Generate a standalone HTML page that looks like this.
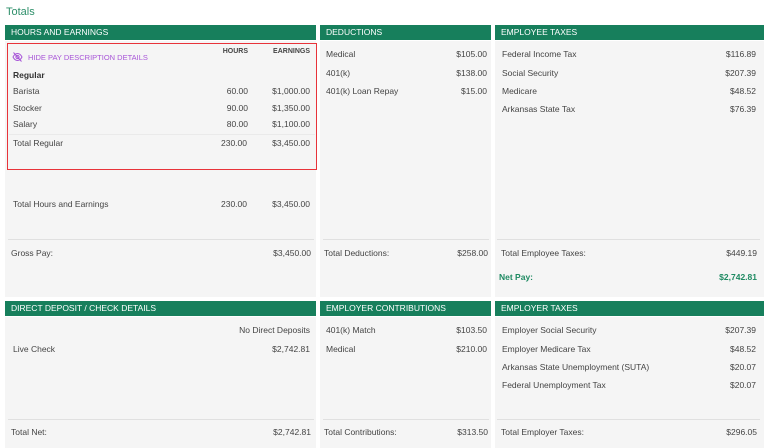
<!DOCTYPE html><html><head><style>
*{margin:0;padding:0;box-sizing:border-box}
body{width:768px;height:448px;background:#fff;font-family:"Liberation Sans",sans-serif;font-size:8.5px;color:#444;position:relative;overflow:hidden}
.a{position:absolute;white-space:nowrap;line-height:12px;height:12px}
.p{position:absolute;background:#f5f5f5}
.h{position:absolute;background:#177f5c;color:#fff;font-size:8.5px;line-height:15px;padding-left:6px;height:15px}
.l{position:absolute;height:1px;background:#e0e0e0}
.r{text-align:right}
</style></head><body>
<div class="a" style="left:6px;top:6px;font-size:11px;color:#2e8f6a;line-height:13px;height:13px">Totals</div>

<div class="h" style="left:5px;top:25px;width:311px">HOURS AND EARNINGS</div>
<div class="h" style="left:320px;top:25px;width:171px">DEDUCTIONS</div>
<div class="h" style="left:495px;top:25px;width:269px">EMPLOYEE TAXES</div>
<div class="p" style="left:5px;top:41px;width:311px;height:256px"></div>
<div class="p" style="left:320px;top:41px;width:171px;height:256px"></div>
<div class="p" style="left:495px;top:41px;width:269px;height:256px"></div>

<div class="h" style="left:5px;top:301px;width:311px">DIRECT DEPOSIT / CHECK DETAILS</div>
<div class="h" style="left:320px;top:301px;width:171px">EMPLOYER CONTRIBUTIONS</div>
<div class="h" style="left:495px;top:301px;width:269px">EMPLOYER TAXES</div>
<div class="p" style="left:5px;top:317px;width:311px;height:131px"></div>
<div class="p" style="left:320px;top:317px;width:171px;height:131px"></div>
<div class="p" style="left:495px;top:317px;width:269px;height:131px"></div>

<div style="position:absolute;left:7px;top:43px;width:310px;height:127px;border:1px solid #e8333a"></div>
<svg style="position:absolute;left:12px;top:52px" width="11" height="10" viewBox="0 0 11 10"><path d="M1 5C2.5 2 4 1.5 5.5 1.5S8.5 2 10 5C8.5 8 7 8.5 5.5 8.5S2.5 8 1 5Z" fill="none" stroke="#a855d8" stroke-width="1"/><circle cx="5.5" cy="5" r="1.6" fill="none" stroke="#a855d8"/><path d="M1.5 0.5L9.5 9.5" stroke="#a855d8" stroke-width="1"/></svg>
<div class="a" style="left:28px;top:52px;color:#a855d8;font-size:7.5px">HIDE PAY DESCRIPTION DETAILS</div>
<div class="a" style="left:200px;top:46px;width:48px;text-align:right;font-size:7px;font-weight:bold;color:#444">HOURS</div>
<div class="a" style="left:250px;top:46px;width:60px;text-align:right;font-size:7px;font-weight:bold;color:#444">EARNINGS</div>
<div class="a" style="left:13px;top:69px;font-weight:bold;color:#333">Regular</div>
<div class="a" style="left:13px;top:85px">Barista</div><div class="a r" style="left:190px;top:85px;width:58px">60.00</div><div class="a r" style="left:250px;top:85px;width:60px">$1,000.00</div>
<div class="a" style="left:13px;top:102px">Stocker</div><div class="a r" style="left:190px;top:102px;width:58px">90.00</div><div class="a r" style="left:250px;top:102px;width:60px">$1,350.00</div>
<div class="a" style="left:13px;top:118px">Salary</div><div class="a r" style="left:190px;top:118px;width:58px">80.00</div><div class="a r" style="left:250px;top:118px;width:60px">$1,100.00</div>
<div class="l" style="left:9px;top:134px;width:306px;background:#eaeaea"></div>
<div class="a" style="left:13px;top:137px">Total Regular</div><div class="a r" style="left:190px;top:137px;width:57px">230.00</div><div class="a r" style="left:250px;top:137px;width:60px">$3,450.00</div>
<div class="a" style="left:13px;top:198px">Total Hours and Earnings</div><div class="a r" style="left:190px;top:198px;width:57px">230.00</div><div class="a r" style="left:250px;top:198px;width:60px">$3,450.00</div>
<div class="l" style="left:8px;top:239px;width:306px"></div>
<div class="a" style="left:11px;top:247px">Gross Pay:</div><div class="a r" style="left:250px;top:247px;width:61px">$3,450.00</div>

<div class="a" style="left:326px;top:48px">Medical</div><div class="a r" style="left:420px;top:48px;width:67px">$105.00</div>
<div class="a" style="left:326px;top:67px">401(k)</div><div class="a r" style="left:420px;top:67px;width:67px">$138.00</div>
<div class="a" style="left:326px;top:85px">401(k) Loan Repay</div><div class="a r" style="left:420px;top:85px;width:67px">$15.00</div>
<div class="l" style="left:323px;top:239px;width:166px"></div>
<div class="a" style="left:324px;top:247px">Total Deductions:</div><div class="a r" style="left:420px;top:247px;width:68px">$258.00</div>

<div class="a" style="left:502px;top:48px">Federal Income Tax</div><div class="a r" style="left:680px;top:48px;width:76px">$116.89</div>
<div class="a" style="left:502px;top:67px">Social Security</div><div class="a r" style="left:680px;top:67px;width:76px">$207.39</div>
<div class="a" style="left:502px;top:85px">Medicare</div><div class="a r" style="left:680px;top:85px;width:76px">$48.52</div>
<div class="a" style="left:502px;top:103px">Arkansas State Tax</div><div class="a r" style="left:680px;top:103px;width:76px">$76.39</div>
<div class="l" style="left:497px;top:239px;width:263px"></div>
<div class="a" style="left:501px;top:247px">Total Employee Taxes:</div><div class="a r" style="left:680px;top:247px;width:77px">$449.19</div>
<div class="a" style="left:499px;top:271px;font-weight:bold;color:#1e8a62">Net Pay:</div><div class="a r" style="left:680px;top:271px;width:77px;font-weight:bold;color:#1e8a62">$2,742.81</div>

<div class="a r" style="left:200px;top:324px;width:110px">No Direct Deposits</div>
<div class="a" style="left:13px;top:343px">Live Check</div><div class="a r" style="left:250px;top:343px;width:60px">$2,742.81</div>
<div class="l" style="left:8px;top:419px;width:306px"></div>
<div class="a" style="left:11px;top:426px">Total Net:</div><div class="a r" style="left:250px;top:426px;width:61px">$2,742.81</div>

<div class="a" style="left:326px;top:324px">401(k) Match</div><div class="a r" style="left:420px;top:324px;width:67px">$103.50</div>
<div class="a" style="left:326px;top:343px">Medical</div><div class="a r" style="left:420px;top:343px;width:67px">$210.00</div>
<div class="l" style="left:323px;top:419px;width:166px"></div>
<div class="a" style="left:324px;top:426px">Total Contributions:</div><div class="a r" style="left:420px;top:426px;width:68px">$313.50</div>

<div class="a" style="left:502px;top:324px">Employer Social Security</div><div class="a r" style="left:680px;top:324px;width:76px">$207.39</div>
<div class="a" style="left:502px;top:343px">Employer Medicare Tax</div><div class="a r" style="left:680px;top:343px;width:76px">$48.52</div>
<div class="a" style="left:502px;top:361px">Arkansas State Unemployment (SUTA)</div><div class="a r" style="left:680px;top:361px;width:76px">$20.07</div>
<div class="a" style="left:502px;top:379px">Federal Unemployment Tax</div><div class="a r" style="left:680px;top:379px;width:76px">$20.07</div>
<div class="l" style="left:497px;top:419px;width:263px"></div>
<div class="a" style="left:501px;top:426px">Total Employer Taxes:</div><div class="a r" style="left:680px;top:426px;width:77px">$296.05</div>
</body></html>
